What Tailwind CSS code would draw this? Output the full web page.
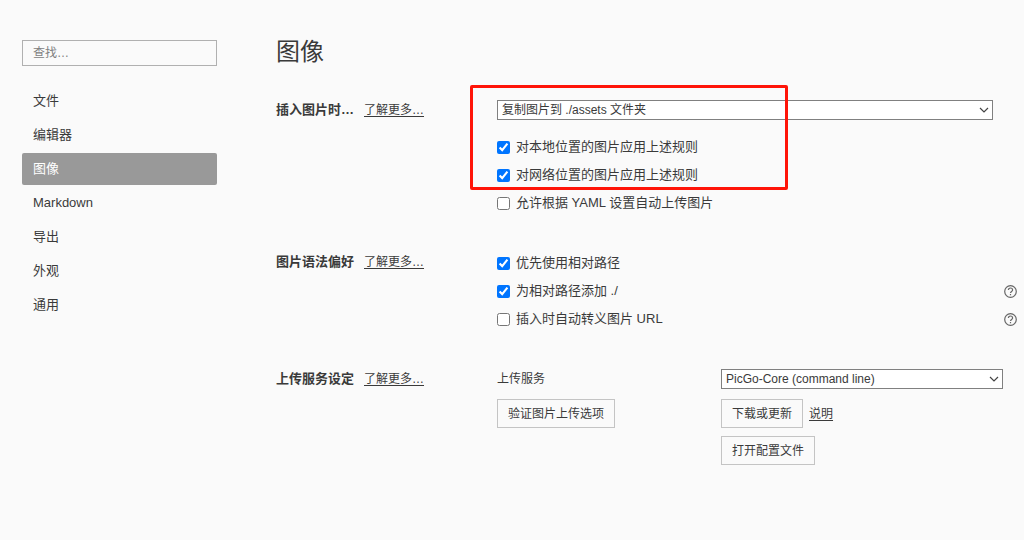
<!DOCTYPE html>
<html lang="zh-CN">
<head>
<meta charset="utf-8">
<meta name="viewport" content="width=device-width, initial-scale=1">
<title>图像</title>
<script src="https://cdn.jsdelivr.net/npm/@tailwindcss/browser@4"></script>
</head>
<body class="min-h-screen bg-[#fafafa] font-['Liberation_Sans','Noto_Sans_CJK_SC',sans-serif] text-[13px] leading-5 text-[#3a3a3a]">
<div class="flex min-h-screen">
  <aside class="w-[217px] shrink-0 pt-10 pl-[22px]">
    <input type="search" aria-label="查找" placeholder="查找…" class="block h-[26px] w-full border border-[#b0b0b0] bg-transparent px-[10px] text-xs outline-none placeholder:text-[#808080]">
    <nav class="mt-[19px] flex flex-col gap-[2px]">
      <a href="#file" class="flex h-8 items-center px-[11px]">文件</a>
      <a href="#editor" class="flex h-8 items-center px-[11px]">编辑器</a>
      <a href="#image" aria-current="page" class="flex h-8 items-center rounded-[2px] bg-[#999] px-[11px] text-white">图像</a>
      <a href="#markdown" class="flex h-8 items-center px-[11px]">Markdown</a>
      <a href="#export" class="flex h-8 items-center px-[11px]">导出</a>
      <a href="#appearance" class="flex h-8 items-center px-[11px]">外观</a>
      <a href="#general" class="flex h-8 items-center px-[11px]">通用</a>
    </nav>
  </aside>

  <main class="min-w-0 flex-1 pt-9 pl-[59px]">
    <h1 class="text-2xl leading-8">图像</h1>

    <section class="mt-8 flex">
      <div class="flex h-5 w-[221px] shrink-0 items-center">
        <h2 class="w-[88px] font-bold">插入图片时…</h2>
        <a href="#more-insert" class="text-xs underline underline-offset-2">了解更多…</a>
      </div>
      <div class="relative min-w-0 flex-1">
        <div class="relative mr-[31px]">
          <select aria-label="插入图片时" class="block h-5 w-full appearance-none border border-[#808080] bg-white px-1 text-xs leading-4">
            <option>复制图片到 ./assets 文件夹</option>
          </select>
          <svg class="pointer-events-none absolute top-[6px] right-1 h-2 w-[10px]" viewBox="0 0 10 8" fill="none" stroke="#444" stroke-width="1.2" aria-hidden="true"><path d="M1 2l4 4 4-4"/></svg>
        </div>
        <div class="mt-[13px]">
          <label class="flex h-7 items-center gap-[6px]"><input type="checkbox" checked class="size-[13px]">对本地位置的图片应用上述规则</label>
          <label class="flex h-7 items-center gap-[6px]"><input type="checkbox" checked class="size-[13px]">对网络位置的图片应用上述规则</label>
          <label class="flex h-7 items-center gap-[6px]"><input type="checkbox" class="size-[13px]">允许根据 YAML 设置自动上传图片</label>
        </div>
        <div class="pointer-events-none absolute -top-[15px] -left-[27px] h-[105px] w-[318px] rounded-[2px] border-3 border-[#ff1408]"></div>
      </div>
    </section>

    <section class="mt-8 flex">
      <div class="flex h-[26px] w-[221px] shrink-0 items-center">
        <h2 class="w-[88px] font-bold">图片语法偏好</h2>
        <a href="#more-syntax" class="text-xs underline underline-offset-2">了解更多…</a>
      </div>
      <div class="min-w-0 flex-1 pr-[7px]">
        <label class="flex h-7 items-center gap-[6px]"><input type="checkbox" checked class="size-[13px]">优先使用相对路径</label>
        <div class="flex h-7 items-center justify-between">
          <label class="flex items-center gap-[6px]"><input type="checkbox" checked class="size-[13px]">为相对路径添加 ./</label>
          <button type="button" aria-label="帮助"><svg class="block size-[13px]" viewBox="0 0 13 13" fill="none" stroke="#666" stroke-width="1.2" aria-hidden="true"><circle cx="6.5" cy="6.5" r="5.8"/><path d="M4.4 5.1c0-1.3.9-2.1 2.1-2.1s2.1.8 2.1 1.9c0 1.5-2.1 1.6-2.1 3.2M6.5 9v1.3"/></svg></button>
        </div>
        <div class="flex h-7 items-center justify-between">
          <label class="flex items-center gap-[6px]"><input type="checkbox" class="size-[13px]">插入时自动转义图片 URL</label>
          <button type="button" aria-label="帮助"><svg class="block size-[13px]" viewBox="0 0 13 13" fill="none" stroke="#666" stroke-width="1.2" aria-hidden="true"><circle cx="6.5" cy="6.5" r="5.8"/><path d="M4.4 5.1c0-1.3.9-2.1 2.1-2.1s2.1.8 2.1 1.9c0 1.5-2.1 1.6-2.1 3.2M6.5 9v1.3"/></svg></button>
        </div>
      </div>
    </section>

    <section class="mt-9 flex">
      <div class="flex h-5 w-[221px] shrink-0 items-center">
        <h2 class="w-[88px] font-bold">上传服务设定</h2>
        <a href="#more-upload" class="text-xs underline underline-offset-2">了解更多…</a>
      </div>
      <div class="flex min-w-0 flex-1 pr-[21px] text-xs">
        <div class="flex w-[224px] shrink-0 flex-col items-start gap-[10px]">
          <label for="service" class="h-5 leading-5">上传服务</label>
          <button type="button" class="h-[29px] border border-[#c4c4c4] px-[10px]">验证图片上传选项</button>
        </div>
        <div class="flex min-w-0 flex-1 flex-col items-start">
          <div class="relative w-full">
            <select id="service" class="block h-5 w-full appearance-none border border-[#808080] bg-white px-1 leading-4">
              <option>PicGo-Core (command line)</option>
            </select>
            <svg class="pointer-events-none absolute top-[6px] right-1 h-2 w-[10px]" viewBox="0 0 10 8" fill="none" stroke="#444" stroke-width="1.2" aria-hidden="true"><path d="M1 2l4 4 4-4"/></svg>
          </div>
          <div class="mt-[10px] flex items-center gap-[6px]">
            <button type="button" class="h-[29px] border border-[#c4c4c4] px-[10px]">下载或更新</button>
            <a href="#guide" class="underline underline-offset-2">说明</a>
          </div>
          <button type="button" class="mt-2 h-[29px] border border-[#c4c4c4] px-[10px]">打开配置文件</button>
        </div>
      </div>
    </section>
  </main>
</div>
</body>
</html>
